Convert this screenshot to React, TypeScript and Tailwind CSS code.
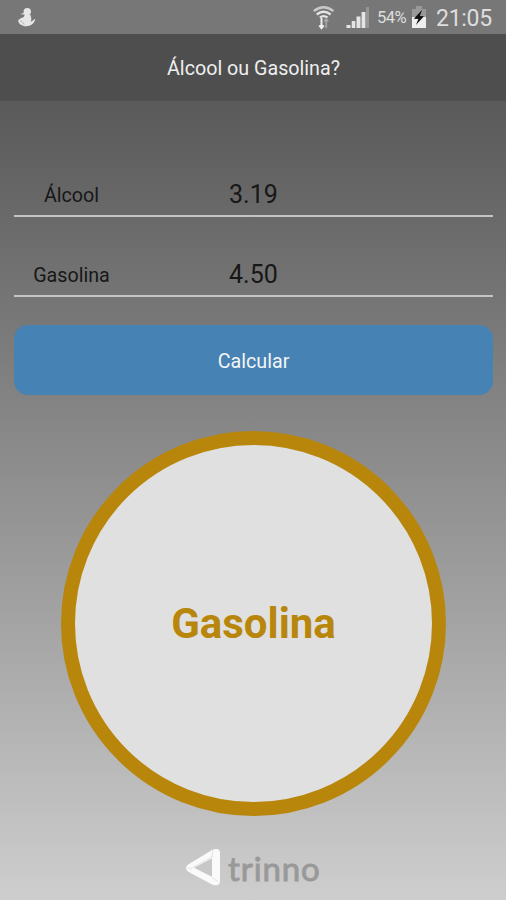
import React from "react";

function StatusBar() {
  return (
    <div className="flex h-[34px] items-center bg-[#777777] text-[#dedede]">
      <svg className="ml-[17px] shrink-0" width="20" height="22" viewBox="0 0 20 22" fill="#e6e6e6">
        <circle cx="10.3" cy="5.6" r="3.7" />
        <path d="M7.4 6.5 3.3 8.3l4.5.3-1 2.3C3.3 11.8 1 14 1.2 15c.5 2.8 3.8 5.3 8 5.3 5.6 0 8.8-4.2 9.1-7.5l-4.6 3.3c1.4-3.7.2-4.8-.2-7z" />
        <path d="M3 14.8c2 .5 3.2 1.6 4.2 3.7" stroke="#a5a5a5" strokeWidth=".8" fill="none" />
      </svg>
      <svg className="ml-[275px] shrink-0" width="24" height="26" viewBox="0 0 24 26" fill="none">
        <path d="M1.8 7.2Q11.5-.6 21.5 7.2" stroke="#c9c9c9" strokeWidth="2.3" />
        <path d="M4.8 10.5Q11.5 5 18.6 10.5" stroke="#e5e5e5" strokeWidth="2.3" />
        <path d="M7.8 13.5Q11.5 10.6 15.5 13.5" stroke="#e5e5e5" strokeWidth="2.2" />
        <path d="M9.5 14v10M7.3 21.4l2.2 2.8 2.2-2.8" stroke="#eeeeee" strokeWidth="2" />
        <path d="M14.2 24V15M12.3 17.5l1.9-2.5 2 2.5" stroke="#a5a5a5" strokeWidth="1.8" />
      </svg>
      <svg className="ml-[10px] shrink-0" width="24" height="24" viewBox="0 0 24 24">
        <path d="M.5 20h4v3h-4zM5.7 16h3.6v7H5.7zM10.5 11.5h4V23h-4zM15.6 7h3.8v16h-3.8z" fill="#e5e5e5" />
        <path d="M20 2h3v21h-3z" fill="#969696" />
      </svg>
      <span className="ml-[7px] mt-[2px] w-[31px] whitespace-nowrap text-[16.5px] leading-none tracking-[-0.5px]">54%</span>
      <svg className="ml-[3px] mr-px shrink-0" width="16" height="24" viewBox="0 0 16 24">
        <path d="M5 1h6v3h4v8H1V4h4z" fill="#999999" />
        <path d="M1 12h14v11H1z" fill="#eeeeee" />
        <path d="m11.2 4.8-8.4 9 4.6.2-2.5 5.9 8.1-8.6-4.2-.2z" fill="#111111" />
      </svg>
      <span className="ml-[8px] mt-[2px] whitespace-nowrap text-[23px] leading-none tracking-[-0.3px]">21:05</span>
    </div>
  );
}

function PriceRow({ label, value }: { label: string; value: string }) {
  return (
    <div className="flex h-[45px] items-center border-b-2 border-[#c4c4c4] pt-[2px] text-[#171717]">
      <span className="w-[115px] pt-[2px] text-center text-[19.7px] leading-none">{label}</span>
      <span className="ml-[100px] text-[25px] leading-none">{value}</span>
    </div>
  );
}

function Brand() {
  return (
    <div className="flex h-[42px] items-center">
      <svg className="ml-[170px] shrink-0" width="38" height="40" viewBox="0 0 38 42" preserveAspectRatio="none">
        <path d="M3.8 17.5 28.4 1.9Q36-.7 36 5v29q0 7-7.4 4.5L4.2 25Q-.2 21.3 3.8 17.5Z" fill="#fafafa" />
        <path d="m10 20.8 18-10v19.5Z" fill="#c7c7c7" />
        <path d="m3 19.5 2.8 2.8L28.5 9M28 10l.6-7.6M28 31l6.2 4.5" fill="none" stroke="#dddddd" strokeWidth=".8" />
      </svg>
      <span className="ml-[6px] whitespace-nowrap font-['Lato',sans-serif] text-[33px] font-normal leading-none tracking-[0.9px] text-[#999999] [-webkit-text-stroke:0.9px_#999999]">trinno</span>
    </div>
  );
}

export default function App() {
  return (
    <main className="flex h-[900px] w-[506px] flex-col overflow-hidden bg-[#595959] font-['Roboto',sans-serif]">
      <StatusBar />
      <header className="flex h-[67px] items-center justify-center bg-[#4e4e4e] pl-px pt-[3px] text-[19.7px] leading-none text-[#eeeeee]">
        <h1>Álcool ou Gasolina?</h1>
      </header>
      <section className="flex flex-1 flex-col bg-linear-to-b from-[#5a5a5a] to-[#cecece] pl-[14px] pr-[13px] pt-[71px]">
        <div className="flex flex-col gap-[35px]">
          <PriceRow label="Álcool" value="3.19" />
          <PriceRow label="Gasolina" value="4.50" />
        </div>
        <button className="mt-[28px] h-[70px] shrink-0 rounded-[14px] bg-[#4682b4] pt-[4px] text-[19.7px] leading-none text-[#f5f5f5]">
          Calcular
        </button>
        <div className="mt-[36px] flex h-[385px] w-[385px] shrink-0 items-center justify-center self-center rounded-full border-[14px] border-[#b8860b] bg-[#e0e0e0]">
          <strong className="text-[42px] font-bold leading-none text-[#b8860b]">Gasolina</strong>
        </div>
        <footer className="mt-[31px]">
          <Brand />
        </footer>
      </section>
    </main>
  );
}
